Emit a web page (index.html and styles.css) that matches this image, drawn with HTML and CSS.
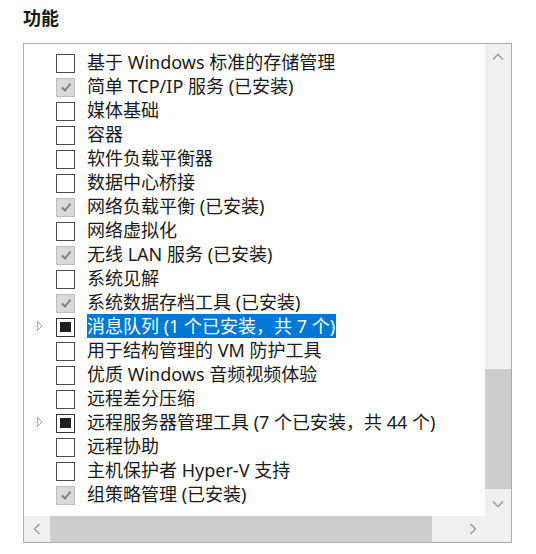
FILE: index.html
```html
<!DOCTYPE html>
<html lang="zh-CN">
<head>
<meta charset="utf-8">
<link rel="stylesheet" href="styles.css">
</head>
<body>
<div class="title">功能</div>
<div class="box">
  <div class="main">
    <div class="list">
      <div class="row"><span class="exp"></span><span class="cb"></span><span class="lbl">基于 Windows 标准的存储管理</span></div>
      <div class="row"><span class="exp"></span><span class="cb checked"><svg viewBox="0 0 14 14"><path d="M3 7.5 L6 10.5 L11.5 3.5"/></svg></span><span class="lbl">简单 TCP/IP 服务 (已安装)</span></div>
      <div class="row"><span class="exp"></span><span class="cb"></span><span class="lbl">媒体基础</span></div>
      <div class="row"><span class="exp"></span><span class="cb"></span><span class="lbl">容器</span></div>
      <div class="row"><span class="exp"></span><span class="cb"></span><span class="lbl">软件负载平衡器</span></div>
      <div class="row"><span class="exp"></span><span class="cb"></span><span class="lbl">数据中心桥接</span></div>
      <div class="row"><span class="exp"></span><span class="cb checked"><svg viewBox="0 0 14 14"><path d="M3 7.5 L6 10.5 L11.5 3.5"/></svg></span><span class="lbl">网络负载平衡 (已安装)</span></div>
      <div class="row"><span class="exp"></span><span class="cb"></span><span class="lbl">网络虚拟化</span></div>
      <div class="row"><span class="exp"></span><span class="cb checked"><svg viewBox="0 0 14 14"><path d="M3 7.5 L6 10.5 L11.5 3.5"/></svg></span><span class="lbl">无线 LAN 服务 (已安装)</span></div>
      <div class="row"><span class="exp"></span><span class="cb"></span><span class="lbl">系统见解</span></div>
      <div class="row"><span class="exp"></span><span class="cb checked"><svg viewBox="0 0 14 14"><path d="M3 7.5 L6 10.5 L11.5 3.5"/></svg></span><span class="lbl">系统数据存档工具 (已安装)</span></div>
      <div class="row"><span class="exp"><svg viewBox="0 0 8 12"><path d="M1.5 1.5 L6 6 L1.5 10.5 Z"/></svg></span><span class="cb partial"><span class="sq"></span></span><span class="lbl sel">消息队列 (1 个已安装，共 7 个)</span></div>
      <div class="row"><span class="exp"></span><span class="cb"></span><span class="lbl">用于结构管理的 VM 防护工具</span></div>
      <div class="row"><span class="exp"></span><span class="cb"></span><span class="lbl">优质 Windows 音频视频体验</span></div>
      <div class="row"><span class="exp"></span><span class="cb"></span><span class="lbl">远程差分压缩</span></div>
      <div class="row"><span class="exp"><svg viewBox="0 0 8 12"><path d="M1.5 1.5 L6 6 L1.5 10.5 Z"/></svg></span><span class="cb partial"><span class="sq"></span></span><span class="lbl">远程服务器管理工具 (7 个已安装，共 44 个)</span></div>
      <div class="row"><span class="exp"></span><span class="cb"></span><span class="lbl">远程协助</span></div>
      <div class="row"><span class="exp"></span><span class="cb"></span><span class="lbl">主机保护者 Hyper-V 支持</span></div>
      <div class="row"><span class="exp"></span><span class="cb checked"><svg viewBox="0 0 14 14"><path d="M3 7.5 L6 10.5 L11.5 3.5"/></svg></span><span class="lbl">组策略管理 (已安装)</span></div>
    </div>
    <div class="vbar">
      <div class="btn"><svg viewBox="0 0 12 8"><path d="M1 6.5 L6 1.5 L11 6.5"/></svg></div>
      <div class="vtrack"><div class="vthumb"></div></div>
      <div class="btn"><svg viewBox="0 0 12 8"><path d="M1 1.5 L6 6.5 L11 1.5"/></svg></div>
    </div>
  </div>
  <div class="hbar">
    <div class="hbtn"><svg viewBox="0 0 8 12"><path d="M6.5 1 L1.5 6 L6.5 11"/></svg></div>
    <div class="htrack"><div class="hthumb"></div></div>
    <div class="hbtn"><svg viewBox="0 0 8 12"><path d="M1.5 1 L6.5 6 L1.5 11"/></svg></div>
    <div class="corner"></div>
  </div>
</div>
</body>
</html>
```

FILE: styles.css
```css
html, body {
  margin: 0;
  padding: 0;
  background: #ffffff;
}
body {
  width: 536px;
  height: 554px;
  overflow: hidden;
  font-family: "Noto Sans", "Noto Sans CJK SC", sans-serif;
  font-size: 18px;
  color: #1a1a1a;
}
.title {
  margin: 6px 0 0 23px;
  height: 24px;
  line-height: 24px;
  font-weight: bold;
  font-size: 18px;
  color: #1a1a1a;
}
.box {
  margin: 13px 0 0 23px;
  width: 487px;
  height: 498px;
  border: 1px solid #adadad;
  display: flex;
  flex-direction: column;
}
.main {
  display: flex;
  height: 472px;
}
.list {
  flex: 1;
  overflow: hidden;
  padding-top: 6px;
  background: #fff;
}
.row {
  height: 24px;
  display: flex;
  align-items: center;
  white-space: nowrap;
}
.exp {
  width: 32px;
  height: 24px;
  display: flex;
  align-items: center;
  justify-content: flex-start;
  padding-left: 12px;
  box-sizing: border-box;
}
.exp svg {
  width: 8px;
  height: 12px;
}
.exp path {
  fill: none;
  stroke: #a6a6a6;
  stroke-width: 1;
}
.cb {
  width: 19px;
  height: 19px;
  box-sizing: border-box;
  border: 1.5px solid #4d4d4d;
  background: #fff;
  margin-right: 12px;
  margin-top: 2px;
  display: flex;
  align-items: center;
  justify-content: center;
}
.cb.checked {
  background: #dadada;
  border-color: #bdbdbd;
}
.cb svg {
  width: 14px;
  height: 14px;
}
.cb path {
  fill: none;
  stroke: #808080;
  stroke-width: 2;
}
.cb.partial {
  border-color: #333;
}
.cb .sq {
  width: 11px;
  height: 10px;
  background: #1e1e1e;
}
.lbl {
  line-height: 24px;
  height: 24px;
}
.lbl.sel {
  background: #0078d7;
  color: #fff;
  padding-right: 1px;
}
.vbar {
  width: 26px;
  display: flex;
  flex-direction: column;
  background: #f0f0f0;
}
.btn {
  height: 25px;
  display: flex;
  align-items: center;
  justify-content: center;
}
.btn svg {
  width: 12px;
  height: 8px;
}
.vtrack {
  flex: 1;
  display: flex;
  flex-direction: column;
  justify-content: flex-end;
  padding-bottom: 2px;
}
.vthumb {
  height: 120px;
  background: #cdcdcd;
}
.hbar {
  height: 26px;
  display: flex;
  background: #f0f0f0;
}
.hbtn {
  width: 25px;
  display: flex;
  align-items: center;
  justify-content: center;
}
.hbtn svg {
  width: 8px;
  height: 12px;
}
.btn path, .hbtn path {
  fill: none;
  stroke: #a3a3a3;
  stroke-width: 1.6;
}
.htrack {
  flex: 1;
  padding-left: 1px;
  display: flex;
}
.hthumb {
  width: 382px;
  background: #cdcdcd;
}
.corner {
  width: 26px;
}
```
